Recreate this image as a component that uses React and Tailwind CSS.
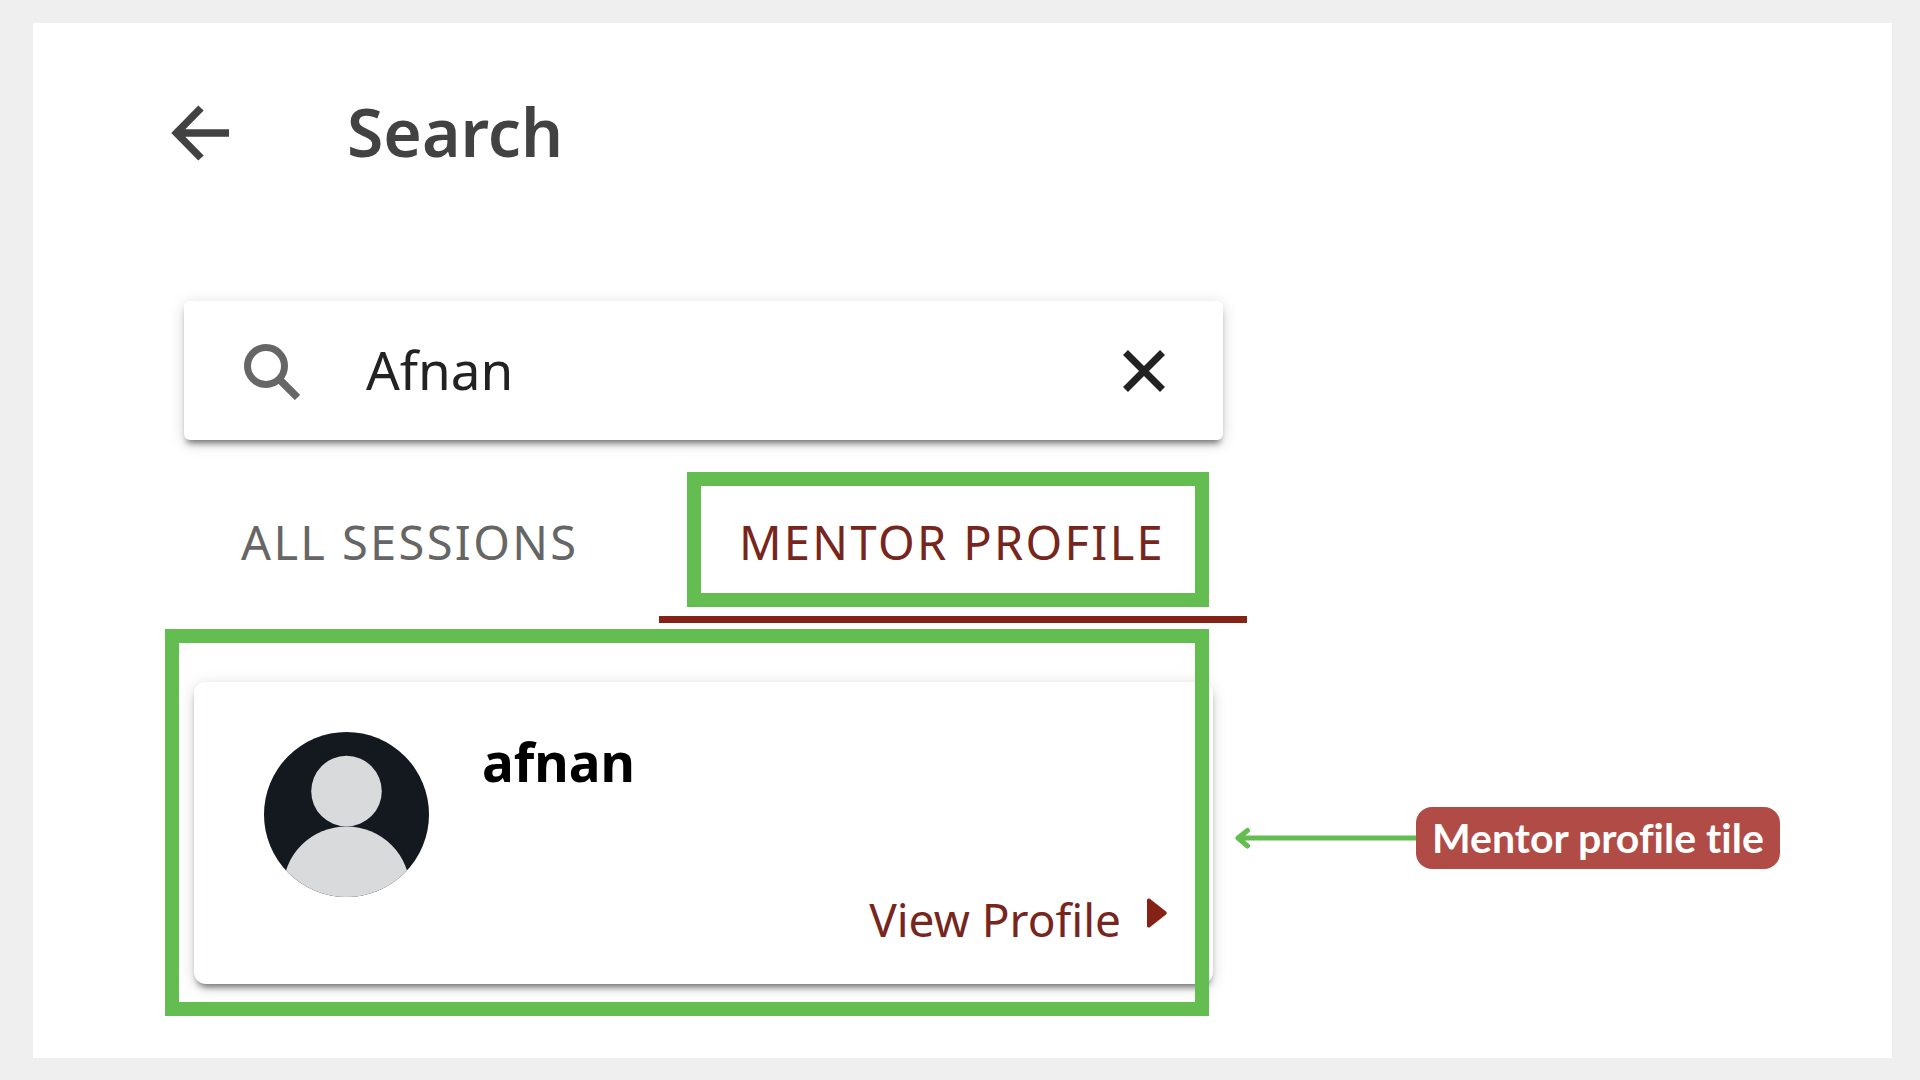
function BackArrow() {
  return (
    <svg viewBox="0 0 58 56" className="h-14 w-[58px]" fill="none" stroke="currentColor" strokeWidth="7.5" aria-hidden="true">
      <path d="M30 3 5.500 28 30 53M5 28h53" />
    </svg>
  );
}

function SearchIcon() {
  return (
    <svg viewBox="0 0 56 56" className="h-14 w-14 shrink-0" fill="none" stroke="currentColor" aria-hidden="true">
      <circle cx="22" cy="22" r="18.500" strokeWidth="7" />
      <path d="M35 35 53.500 53.500" strokeWidth="7.5" />
    </svg>
  );
}

function CloseIcon() {
  return (
    <svg viewBox="0 0 42 42" className="h-[42px] w-[42px]" fill="none" stroke="currentColor" strokeWidth="7" aria-hidden="true">
      <path d="M2.500 2.500l37 37M39.500 2.500l-37 37" />
    </svg>
  );
}

function Avatar() {
  return (
    <svg viewBox="0 0 166 166" className="h-[165px] w-[165px] shrink-0" role="img" aria-label="afnan">
      <defs>
        <clipPath id="avatar-clip">
          <circle cx="83" cy="83" r="83" />
        </clipPath>
      </defs>
      <g clipPath="url(#avatar-clip)">
        <rect width="166" height="166" fill="#14191f" />
        <circle cx="83" cy="59.500" r="35.500" fill="#d9dadc" />
        <circle cx="83" cy="159" r="64" fill="#d9dadc" />
      </g>
    </svg>
  );
}

export default function App() {
  return (
    <div className="flex min-h-screen bg-[#efefef] pt-[23px] pr-7 pb-[22px] pl-[33px] font-['Noto_Sans',sans-serif]">
      <main className="flex-1 bg-white pl-[138px]">
        <header className="flex items-center gap-[118px] pt-[62px] text-[#424242]">
          <button type="button" aria-label="Back">
            <BackArrow />
          </button>
          <h1 className="pb-1 text-[66px] leading-[92px] font-semibold">Search</h1>
        </header>

        <form
          role="search"
          onSubmit={(e) => e.preventDefault()}
          className="mt-[120px] ml-[13px] flex h-[139px] max-w-[1039px] items-center rounded-md bg-white pr-[58px] pl-[60px] shadow-[0_6px_6px_-3px_rgba(0,0,0,0.5),0_3px_16px_rgba(0,0,0,0.16)]"
        >
          <label htmlFor="query" aria-label="Search" className="pt-0.5 text-[#666666]">
            <SearchIcon />
          </label>
          <input
            id="query"
            type="text"
            defaultValue="Afnan"
            className="ml-[66px] min-w-0 flex-1 bg-transparent pb-0.5 text-[53px] leading-[72px] text-[#222222] outline-none"
          />
          <button type="button" aria-label="Clear search" className="text-[#222222]">
            <CloseIcon />
          </button>
        </form>

        <div role="tablist" className="mt-8 flex max-w-[1076px] text-[47px] leading-[64px] tracking-wider">
          <button type="button" role="tab" aria-selected="false" className="flex-1 border-b-[7px] border-transparent pb-1 pl-[70px] text-left text-[#666666]">
            ALL SESSIONS
          </button>
          <button type="button" role="tab" aria-selected="true" className="flex h-[151px] w-[588px] flex-col border-b-[7px] border-[#832215] px-7 text-[#76261d]">
            <span className="flex h-[135px] w-[522px] items-center justify-center border-[14px] border-[#64bd50] pt-1 pl-2 whitespace-nowrap">
              MENTOR PROFILE
            </span>
          </button>
        </div>

        <div className="mt-[59px] ml-[23px] flex items-center">
          <article className="relative flex h-[302px] max-w-[1019px] flex-1 rounded-xl bg-white pr-[46px] pl-[70px] shadow-[0_6px_6px_-3px_rgba(0,0,0,0.5),0_3px_16px_rgba(0,0,0,0.16)]">
            <div className="pt-[50px]">
              <Avatar />
            </div>
            <div className="flex flex-1 flex-col justify-between pt-11 pb-[33px] pl-[53px]">
              <h2 className="text-[53px] leading-[72px] font-bold text-black">afnan</h2>
              <a href="#profile" className="flex items-center gap-[26px] self-end text-[46px] leading-[64px] text-[#76261d]">
                View Profile
                <svg viewBox="0 0 20 42" className="h-[42px] w-5" fill="#832215" aria-hidden="true">
                  <path d="M0 2Q0 0 2.500 0.500L19 13.500Q20.500 15 19 16.500L2.500 29.500Q0 30 0 28Z" />
                </svg>
              </a>
            </div>
            <div className="pointer-events-none absolute -top-[53px] right-1 -bottom-8 -left-[29px] border-[14px] border-[#64bd50]" />
          </article>
          <div className="flex shrink-0 items-center pt-[10px] pl-[22px]">
            <svg viewBox="0 0 181 22" className="h-[22px] w-[181px]" fill="none" stroke="#64bd50" strokeWidth="5" strokeLinecap="round" strokeLinejoin="round" aria-hidden="true">
              <path d="M4 11h180M12.500 3.500 3 11l9.500 8" />
            </svg>
            <p className="rounded-2xl bg-[#b14b46] px-4 py-2 font-['Lato',sans-serif] text-[41px] leading-[46px] font-bold whitespace-nowrap text-white [font-variant-ligatures:none]">
              Mentor profile tile
            </p>
          </div>
        </div>
      </main>
    </div>
  );
}
